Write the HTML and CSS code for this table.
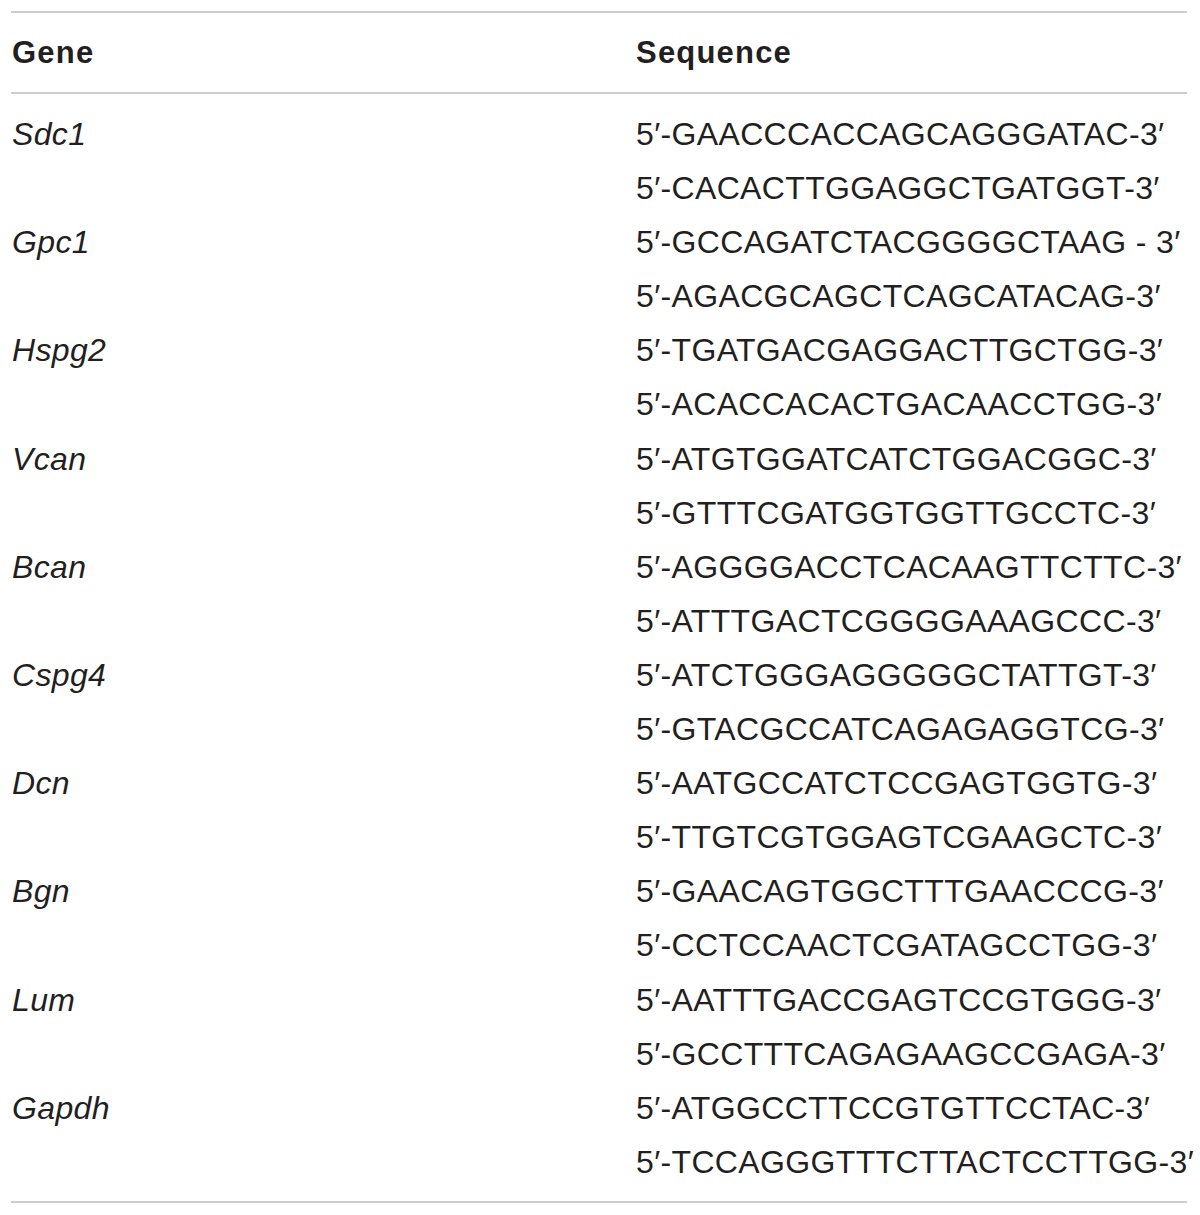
FILE: index.html
```html
<!DOCTYPE html>
<html>
<head>
<meta charset="utf-8">
<link rel="stylesheet" href="styles.css">
</head>
<body>
<div class="wrap">
<table class="primers">
<thead>
<tr><th class="c-gene">Gene</th><th class="c-seq">Sequence</th></tr>
</thead>
<tbody>
<tr class="first"><td class="gene">Sdc1</td><td>5′-GAACCCACCAGCAGGGATAC-3′</td></tr>
<tr><td></td><td>5′-CACACTTGGAGGCTGATGGT-3′</td></tr>
<tr><td class="gene">Gpc1</td><td>5′-GCCAGATCTACGGGGCTAAG - 3′</td></tr>
<tr><td></td><td>5′-AGACGCAGCTCAGCATACAG-3′</td></tr>
<tr><td class="gene">Hspg2</td><td>5′-TGATGACGAGGACTTGCTGG-3′</td></tr>
<tr><td></td><td>5′-ACACCACACTGACAACCTGG-3′</td></tr>
<tr><td class="gene">Vcan</td><td>5′-ATGTGGATCATCTGGACGGC-3′</td></tr>
<tr><td></td><td>5′-GTTTCGATGGTGGTTGCCTC-3′</td></tr>
<tr><td class="gene">Bcan</td><td>5′-AGGGGACCTCACAAGTTCTTC-3′</td></tr>
<tr><td></td><td>5′-ATTTGACTCGGGGAAAGCCC-3′</td></tr>
<tr><td class="gene">Cspg4</td><td>5′-ATCTGGGAGGGGGCTATTGT-3′</td></tr>
<tr><td></td><td>5′-GTACGCCATCAGAGAGGTCG-3′</td></tr>
<tr><td class="gene">Dcn</td><td>5′-AATGCCATCTCCGAGTGGTG-3′</td></tr>
<tr><td></td><td>5′-TTGTCGTGGAGTCGAAGCTC-3′</td></tr>
<tr><td class="gene">Bgn</td><td>5′-GAACAGTGGCTTTGAACCCG-3′</td></tr>
<tr><td></td><td>5′-CCTCCAACTCGATAGCCTGG-3′</td></tr>
<tr><td class="gene">Lum</td><td>5′-AATTTGACCGAGTCCGTGGG-3′</td></tr>
<tr><td></td><td>5′-GCCTTTCAGAGAAGCCGAGA-3′</td></tr>
<tr><td class="gene">Gapdh</td><td>5′-ATGGCCTTCCGTGTTCCTAC-3′</td></tr>
<tr class="last"><td></td><td>5′-TCCAGGGTTTCTTACTCCTTGG-3′</td></tr>
</tbody>
</table>
</div>
</body>
</html>
```
FILE: styles.css
```css
html, body {
  margin: 0;
  padding: 0;
  background: #ffffff;
}

.wrap {
  padding: 11px 0 0 11px;
}

.primers {
  width: 1176px;
  table-layout: fixed;
  border-collapse: collapse;
  font-family: "Liberation Sans", Arial, sans-serif;
  color: #231f20;
  border-top: 2px solid #cdcdcd;
  border-bottom: 2px solid #cdcdcd;
}

.primers th {
  text-align: left;
  font-weight: bold;
  font-size: 31px;
  letter-spacing: 1.2px;
  height: 79px;
  line-height: 79px;
  padding: 0;
  border-bottom: 2px solid #cdcdcd;
}

.primers .c-gene {
  width: 624px;
  padding-left: 1px;
}

.primers td {
  font-size: 32px;
  line-height: 54.1px;
  height: 54.1px;
  padding: 0;
  letter-spacing: 0.35px;
  white-space: nowrap;
  vertical-align: top;
}

.primers td.gene {
  font-style: italic;
  padding-left: 1px;
}

.primers tr.first td {
  padding-top: 13px;
}

.primers tr.last td {
  padding-bottom: 12px;
}
```
